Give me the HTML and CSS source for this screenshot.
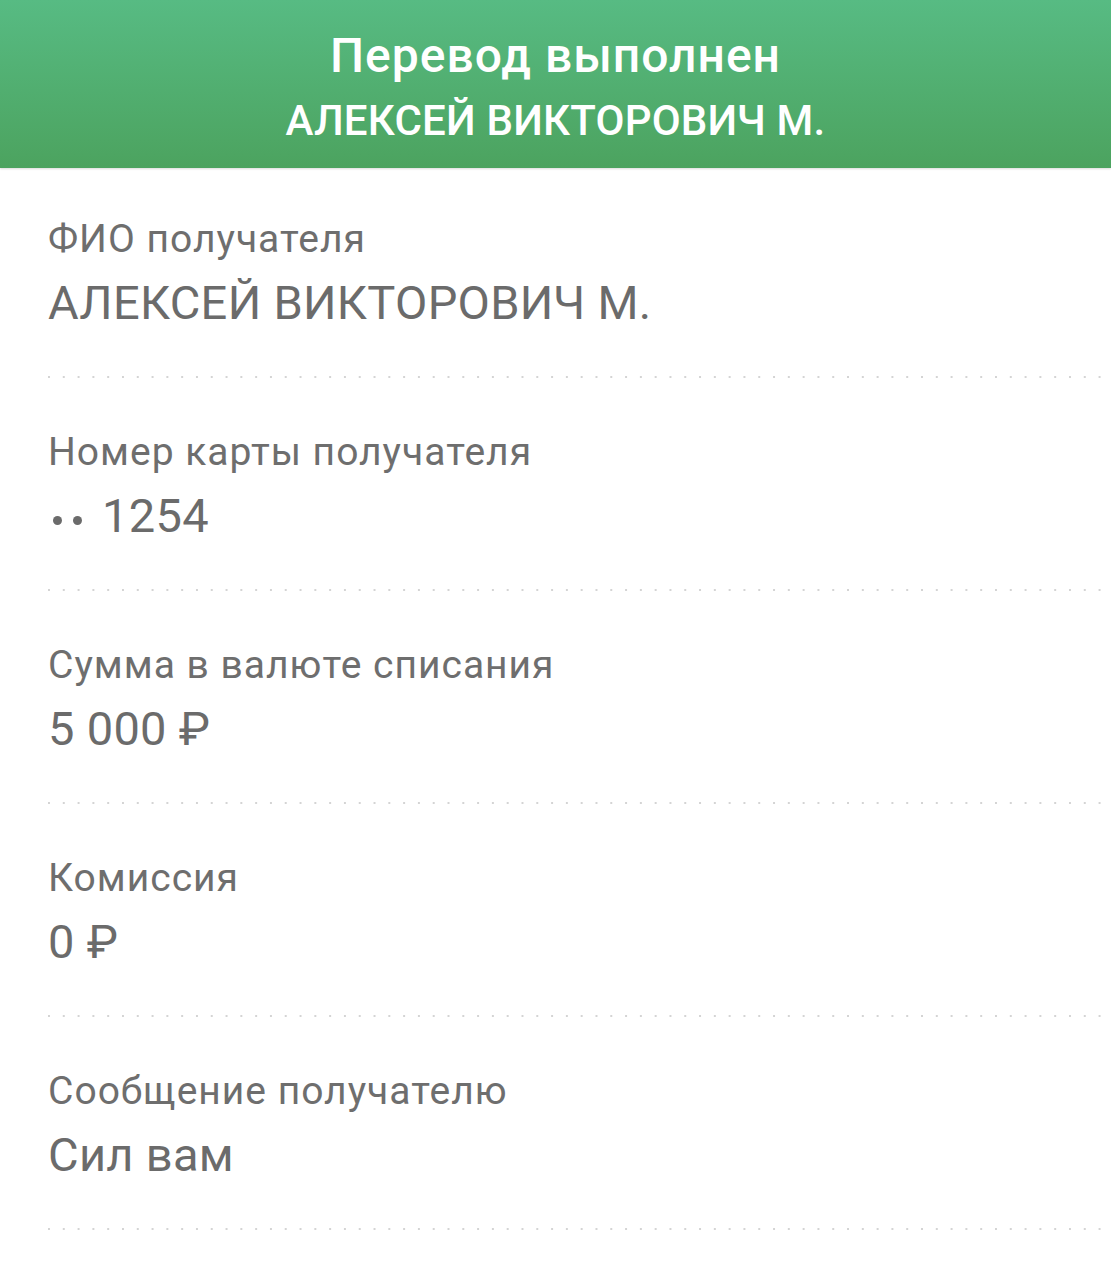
FILE: index.html
```html
<!doctype html>
<html lang="ru">
<head>
    <meta charset="UTF-8">
    <meta name="viewport" content="width=device-width, initial-scale=1.0">
    <title>Перевод выполнен</title>
    <link rel="stylesheet" href="styles.css">
</head>
<body>
<div class="header">
    <div class="header-title">Перевод выполнен</div>
    <div class="header-name">АЛЕКСЕЙ ВИКТОРОВИЧ М.</div>
</div>

<div class="details">
    <div class="row">
        <div class="row-label">ФИО получателя</div>
        <div class="row-value">АЛЕКСЕЙ ВИКТОРОВИЧ М.</div>
    </div>
    <div class="row">
        <div class="row-label">Номер карты получателя</div>
        <div class="row-value"><span class="mask"><i></i><i></i></span>1254</div>
    </div>
    <div class="row">
        <div class="row-label">Сумма в валюте списания</div>
        <div class="row-value">5 000 ₽</div>
    </div>
    <div class="row">
        <div class="row-label">Комиссия</div>
        <div class="row-value">0 ₽</div>
    </div>
    <div class="row">
        <div class="row-label">Сообщение получателю</div>
        <div class="row-value">Сил вам</div>
    </div>
</div>
</body>
</html>
```

FILE: styles.css
```css
body {
    margin: 0;
    background: #fff;
    font-family: Roboto, "Noto Sans", "Liberation Sans", sans-serif;
}

.header {
    height: 168px;
    box-sizing: border-box;
    padding-top: 28px;
    text-align: center;
    color: #fff;
    background: linear-gradient(to bottom, #57bb83, #4ca35f);
    box-shadow: 0 1px 2px rgba(0, 0, 0, 0.15);
}

.header-title {
    font-size: 48px;
    line-height: 56px;
    font-weight: 500;
    letter-spacing: 1px;
}

.header-name {
    margin-top: 9px;
    font-size: 42px;
    line-height: 56px;
    font-weight: 500;
    letter-spacing: 0.2px;
}

.row {
    margin-left: 48px;
    padding: 51px 0 47px;
    background-image: linear-gradient(to right, #d4d4d4 2px, transparent 2px);
    background-size: 14.8px 2px;
    background-repeat: repeat-x;
    background-position: 0 100%;
}

.row:first-child {
    padding-top: 48px;
}

.row-label {
    font-size: 39px;
    line-height: 46px;
    letter-spacing: 1px;
    color: #6e6e6e;
}

.row-value {
    margin-top: 13px;
    font-size: 47px;
    line-height: 56px;
    letter-spacing: 0.3px;
    color: #6b6b6b;
}

.mask {
    display: inline-flex;
    gap: 11px;
    margin: 0 20px 0 5px;
    vertical-align: 7px;
}

.mask i {
    width: 9px;
    height: 9px;
    border-radius: 50%;
    background: #6b6b6b;
}
```
